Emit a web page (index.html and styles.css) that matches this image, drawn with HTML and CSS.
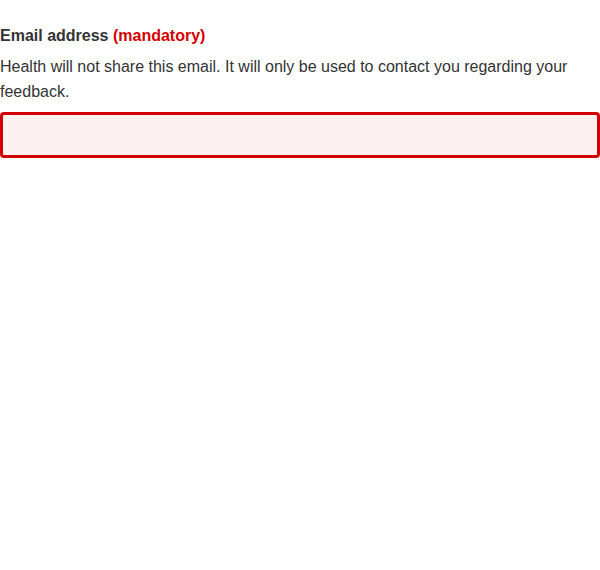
FILE: index.html
```html
<!DOCTYPE html>
<html lang="en">
<head>
<meta charset="utf-8">
<title>Email address</title>
<link rel="stylesheet" href="styles.css">
</head>
<body>
<div class="field">
  <label class="label" for="email">Email address <span class="mandatory">(mandatory)</span></label>
  <p class="hint">Health will not share this email. It will only be used to contact you regarding your feedback.</p>
  <input class="input" id="email" type="email">
</div>
</body>
</html>
```
FILE: styles.css
```css
html, body {
  margin: 0;
  padding: 0;
  background: #fff;
}
body {
  font-family: "Liberation Sans", Arial, sans-serif;
  color: #333;
  font-size: 16px;
  line-height: 24px;
}
.field {
  padding-top: 24px;
  display: flex;
  flex-direction: column;
}
.label {
  font-weight: bold;
  display: block;
}
.mandatory {
  color: #d40000;
}
.hint {
  margin: 6px 0 8px;
  line-height: 25px;
}
.input {
  box-sizing: border-box;
  width: 600px;
  height: 46px;
  margin: 0;
  border: 3px solid #d40000;
  border-radius: 4px;
  background: #fcf0f0;
  font: inherit;
  padding: 0 8px;
  outline: none;
}
```
